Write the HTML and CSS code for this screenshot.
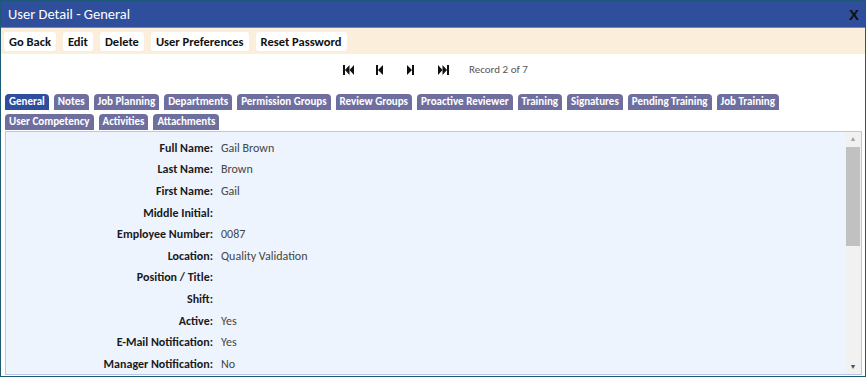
FILE: index.html
```html
<!DOCTYPE html>
<html lang="en">
<head>
  <meta charset="UTF-8" />
  <title>User Detail - General</title>
  <link rel="stylesheet" href="styles.css">
</head>
<body>

  <div class="window">
    <header class="title-bar">
      <div class="title">User Detail - General</div>
      <div class="close-x">X</div>
    </header>

    <div class="toolbar">
      <button class="tool-btn">Go Back</button>
      <button class="tool-btn">Edit</button>
      <button class="tool-btn">Delete</button>
      <button class="tool-btn">User Preferences</button>
      <button class="tool-btn">Reset Password</button>
    </div>

    <div class="record-nav">
      <!-- first -->
      <svg class="nav-icon" width="11" height="10" viewBox="0 0 11 10"><rect x="0" y="0" width="2" height="10"/><polygon points="2,5 6.5,0 6.5,10"/><polygon points="6.5,5 11,0 11,10"/></svg>
      <!-- prev -->
      <svg class="nav-icon" width="7" height="10" viewBox="0 0 7 10"><rect x="0" y="0" width="2" height="10"/><polygon points="2,5 7,0 7,10"/></svg>
      <!-- next -->
      <svg class="nav-icon" width="7" height="10" viewBox="0 0 7 10"><polygon points="0,0 5,5 0,10"/><rect x="5" y="0" width="2" height="10"/></svg>
      <!-- last -->
      <svg class="nav-icon" width="11" height="10" viewBox="0 0 11 10"><polygon points="0,0 4.5,5 0,10"/><polygon points="4.5,0 9,5 4.5,10"/><rect x="9" y="0" width="2" height="10"/></svg>
      <span class="record-text">Record 2 of 7</span>
    </div>

    <div class="tabs">
      <div class="tab-row">
        <div class="tab active">General</div>
        <div class="tab">Notes</div>
        <div class="tab">Job Planning</div>
        <div class="tab">Departments</div>
        <div class="tab">Permission Groups</div>
        <div class="tab">Review Groups</div>
        <div class="tab">Proactive Reviewer</div>
        <div class="tab">Training</div>
        <div class="tab">Signatures</div>
        <div class="tab">Pending Training</div>
        <div class="tab">Job Training</div>
      </div>
      <div class="tab-row">
        <div class="tab">User Competency</div>
        <div class="tab">Activities</div>
        <div class="tab">Attachments</div>
      </div>
    </div>

    <div class="panel">
      <div class="fields">
        <div class="row"><span class="label">Full Name:</span><span class="value">Gail Brown</span></div>
        <div class="row"><span class="label">Last Name:</span><span class="value">Brown</span></div>
        <div class="row"><span class="label">First Name:</span><span class="value">Gail</span></div>
        <div class="row"><span class="label">Middle Initial:</span><span class="value"></span></div>
        <div class="row"><span class="label">Employee Number:</span><span class="value">0087</span></div>
        <div class="row"><span class="label">Location:</span><span class="value">Quality Validation</span></div>
        <div class="row"><span class="label">Position / Title:</span><span class="value"></span></div>
        <div class="row"><span class="label">Shift:</span><span class="value"></span></div>
        <div class="row"><span class="label">Active:</span><span class="value">Yes</span></div>
        <div class="row"><span class="label">E-Mail Notification:</span><span class="value">Yes</span></div>
        <div class="row"><span class="label">Manager Notification:</span><span class="value">No</span></div>
      </div>
      <div class="scrollbar">
        <div class="arrow">&#9650;</div>
        <div class="track"><div class="thumb"></div></div>
        <div class="arrow">&#9660;</div>
      </div>
    </div>
  </div>

</body>
</html>
```

FILE: styles.css
```css
body {
  margin: 0;
  font-family: Carlito, Lato, 'Open Sans', sans-serif;
  background-color: #fff;
}

.window {
  width: 864px;
  height: 375px;
  border: 1px solid #1d5a78;
  display: flex;
  flex-direction: column;
  overflow: hidden;
}

.window > * {
  flex-shrink: 0;
}

.title-bar {
  background-color: #2f4e9c;
  height: 26px;
  display: flex;
  align-items: center;
  justify-content: space-between;
  padding: 0 6px 0 7px;
  border-bottom: 1px solid #6f86c4;
}

.title {
  color: #fff;
  font-size: 14.5px;
}

.close-x {
  color: #111;
  font-family: 'Liberation Sans', sans-serif;
  font-weight: bold;
  font-size: 15px;
}

.toolbar {
  background-color: #fbefdc;
  height: 26px;
  display: flex;
  align-items: center;
  gap: 7px;
  padding: 0 3px;
}

.tool-btn {
  background-color: #fff;
  border: none;
  border-radius: 3px;
  font-family: inherit;
  font-weight: bold;
  font-size: 12.5px;
  color: #111;
  height: 19px;
  padding: 0 5px;
}

.record-nav {
  height: 40px;
  box-sizing: border-box;
  display: flex;
  align-items: flex-start;
  padding: 11px 0 0 342px;
}

.nav-icon {
  fill: #111;
  margin-right: 22px;
}

.nav-icon + .nav-icon {
  margin-right: 24px;
}

.nav-icon:nth-of-type(4) {
  margin-right: 20px;
}

.record-text {
  font-size: 11px;
  line-height: 10px;
  color: #555;
}

.tabs {
  display: flex;
  flex-direction: column;
  gap: 4px;
  padding: 0 4px;
}

.tab-row {
  display: flex;
  gap: 5px;
}

.tab {
  background-color: #6f6f9f;
  color: #fff;
  font-size: 11px;
  font-weight: bold;
  height: 16px;
  line-height: 16px;
  padding: 0 4px;
  border-radius: 4px 4px 0 0;
}

.tab.active {
  background-color: #2f4e9c;
}

.panel {
  flex: 1 1 auto;
  min-height: 0;
  overflow: hidden;
  margin: 1px 3px 1px 4px;
  background-color: #eef4fe;
  border: 1px solid #b8c8e4;
  display: flex;
}

.fields {
  flex: 1;
  padding-top: 5px;
}

.row {
  display: flex;
  gap: 8px;
  height: 21.6px;
  align-items: center;
  font-size: 12px;
}

.label {
  width: 207px;
  text-align: right;
  font-weight: bold;
  color: #1a1a1a;
}

.value {
  color: #444;
}

.scrollbar {
  width: 16px;
  background-color: #f1f1f1;
  display: flex;
  flex-direction: column;
}

.arrow {
  height: 14px;
  font-size: 7px;
  color: #a3a3a3;
  text-align: center;
  line-height: 14px;
}

.arrow:last-child {
  color: #505050;
}

.track {
  flex: 1;
  padding: 1px;
}

.thumb {
  height: 99px;
  background-color: #c1c1c1;
}
```
